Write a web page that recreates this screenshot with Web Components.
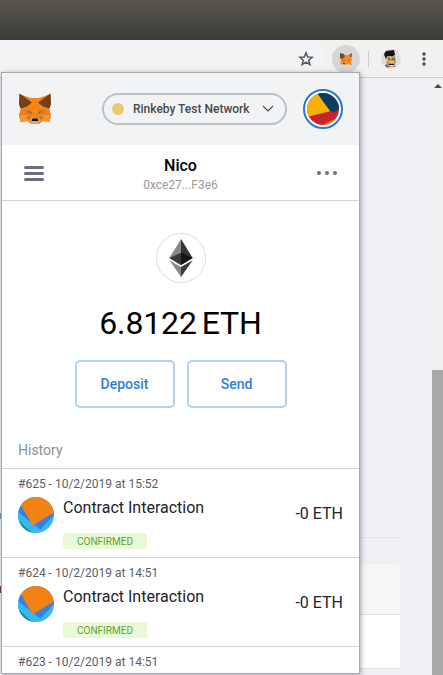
<!DOCTYPE html>
<html lang="en"><head><meta charset="utf-8"><title>MetaMask</title>
<style>html,body{margin:0;height:675px;overflow:hidden;background:#eff0f5;font-family:Roboto,"Liberation Sans",sans-serif}</style></head>
<body><wallet-desktop></wallet-desktop>
<script>
const define=(name,html)=>customElements.define(name,class extends HTMLElement{
  constructor(){super();const t=document.createElement('template');t.innerHTML=html;this.attachShadow({mode:'open'}).append(t.content.cloneNode(true));}
});
define('fox-logo',`<style>:host{display:block}svg{display:block;width:100%;height:100%}</style>
<svg viewBox="0 0 34 32"><path fill="#f6851b" d="M1.500 1 13 5H21L32.500 1 33 11 31 16 33 22 31.500 29 25 28 21 31H13L9 28 2.500 29 1 22 3 16 1 11Z"/>
<path fill="#763d16" d="M1.500 .5 14 9.500 9 13.500 2.500 15.500 1 11ZM32.500 .5 20 9.500 25 13.500 31.500 15.500 33 11Z"/>
<path fill="#e98124" d="M1 22 3 16 11 15 13 24 2 23ZM33 22 31 16 23 15 21 24 32 23Z"/>
<path fill="#f89232" d="M1 22H9L11 28 2.500 29ZM33 22H25L23 28 31.500 29Z"/>
<path fill="#d66f1b" d="M8 17 13 18 14 21 9 20ZM26 17 21 18 20 21 25 20ZM8 25 11 23 14 28ZM26 25 23 23 20 28Z"/>
<path fill="#6b5a55" d="M10.500 18.400 13.500 19 13 20.300ZM23.500 18.400 20.500 19 21 20.300Z"/>
<path fill="#c0ad9e" d="M11.500 27 14 25H20L22.500 27 21.500 29 19.500 31H14.500L12.500 29Z"/><path fill="#161616" d="M14.500 25.500H19.500L20.500 28H13.500Z"/></svg>`);
define('extension-icon',`<style>:host{display:block}svg{display:block}</style><svg width="14" height="14" viewBox="0 0 14 14"><path fill="#f08a2c" d="M1 1 5 3H9L13 1 12.500 5 13 8 12 10 13 13 9 12 6 13 1 12 2 9 1 6Z"/><path fill="#7c4a1d" d="M1 1 5 2 6 5 3 7 1 6Z"/><path fill="#b5651f" d="M13 1 10 3 11 5 13 5Z"/><path fill="#c9651c" d="M3 8 6 8 5 10ZM9 7 11 8 9 9Z"/><path fill="#5b463b" d="M4 11H6V12H4Z"/></svg>`);
define('browser-toolbar',`<style>:host{display:block}.title{height:40px;background:linear-gradient(#59574f,#3d3b37)}
.bar{height:37px;background:#f2f1ef;border-bottom:1px solid #cfcfcf;display:flex;align-items:center}
.address{width:326px;height:36px;box-sizing:border-box;background:#f1f3f4;border-radius:0 18px 18px 0;display:flex;align-items:center;justify-content:flex-end;padding-right:12px}
.ext{width:28px;height:28px;border-radius:50%;background:#d7d6d4;display:grid;place-items:center;margin-left:6px}
.sep{width:1px;height:16px;background:#cfcecd;margin:0 12px 0 8px}svg{display:block}.menu{margin-left:21px}</style>
<div class="title"></div><div class="bar"><div class="address"><svg width="16" height="16" viewBox="0 0 16 16" fill="none" stroke="#55585c" stroke-width="1.500"><path d="M8 1.800 9.700 6 14.200 6.300 10.700 9.200 11.900 13.700 8 11.200 4.100 13.700 5.300 9.200 1.800 6.300 6.300 6Z"/></svg></div>
<div class="ext"><extension-icon></extension-icon></div><div class="sep"></div>
<svg width="20" height="20" viewBox="0 0 20 20"><circle cx="10" cy="10" r="10" fill="#dedddc"/><path fill="#c19548" d="M5 7H14L15 13 13 18H7L5 13Z"/><path fill="#e0bc70" d="M5 9H7V13H5ZM8 12H13V14H8Z"/><path fill="#151515" d="M3 5 5 2 13 1 14 6 12 7 6 7 5 10 4 8ZM8 15H13V16H8Z"/><path fill="#3f70bb" d="M7 9H9V11H7ZM11 9H14V11H11ZM4 16 6 15 8 19 5 18ZM13 18 15 16 14 18Z"/><path fill="#fff" d="M9 16H12V17H9ZM9 8H10V9H9Z"/></svg>
<svg class="menu" width="4" height="16" viewBox="0 0 4 16" fill="#48494b"><circle cx="2" cy="3" r="1.700"/><circle cx="2" cy="8" r="1.700"/><circle cx="2" cy="13" r="1.700"/></svg></div>`);
define('page-backdrop',`<style>:host{display:flex;height:597px;background:#eff0f5;justify-content:space-between}
.edge{width:1px;padding-top:435px;box-sizing:border-box}.blue{height:6px;background:#6f9bd0}.red{height:7px;margin-top:67px;background:#75443b}
.content{width:399px;padding-top:459px;margin-right:auto}.rule{height:1px;background:#e3e4e7}.panel{margin-top:26px;height:50px;background:#f6f6f7;border-bottom:1px solid #e2e2e3;border-radius:0 4px 0 0}.body{height:53px;background:#fff;border-bottom:1px solid #e2e2e3}
.scroll{width:11px;background:#f1f1f0}.arrow{width:0;border:4px solid transparent;border-top:0;border-bottom-color:#4c4c4c;margin:6px 0 282px 2px}.thumb{height:305px;background:#a8a8a8}</style>
<div class="edge"><div class="blue"></div><div class="red"></div></div><div class="content"><div class="rule"></div><div class="panel"></div><div class="body"></div></div><div class="scroll"><div class="arrow"></div><div class="thumb"></div></div>`);
define('network-picker',`<style>:host{display:flex;box-sizing:border-box;width:185px;height:32px;border:2px solid #bbc0c5;border-radius:16px;align-items:center;padding-left:8px;font:500 12px/14px Roboto,sans-serif;color:#4a4a4a}
i{width:12px;height:12px;border-radius:50%;background:#ebc871;margin-right:9px}span{width:118px;white-space:nowrap}svg{margin-left:11px}</style>
<i></i><span><slot></slot></span><svg width="12" height="8" viewBox="0 0 12 8" fill="none" stroke="#4c4c4c" stroke-width="1.200"><path d="M1 1 6 6 11 1"/></svg>`);
define('account-avatar',`<style>:host{display:block;width:40px;height:40px}svg{display:block}</style><svg width="40" height="40" viewBox="0 0 40 40"><defs><clipPath id="a"><circle cx="20" cy="20" r="16"/></clipPath></defs><circle cx="20" cy="20" r="19" fill="#fff" stroke="#267ad7" stroke-width="2"/><g clip-path="url(#a)"><path fill="#c8242d" d="M0 0H40V40H0Z"/><path fill="#f9b10a" d="M0 0H12L28 22 0 29Z"/><path fill="#0d3d5c" d="M11 0H40V18L30.500 23.500 27 22Z"/><path fill="#f66b13" d="M18 36.500 38 27V40H18Z"/></g></svg>`);
define('account-bar',`<style>:host{display:flex;height:55px;border-bottom:1px solid #d1d3d5;align-items:center;justify-content:space-between;padding:0 22px}
.burger{width:20px;height:15px;display:flex;flex-direction:column;justify-content:space-between;margin-top:1px}.burger i{height:3px;border-radius:1.500px;background:#68707b}
.name{text-align:center;font:500 16px/18px Roboto,sans-serif;color:#000;margin-top:3px}.addr{font:400 12px/14px Roboto,sans-serif;color:#9b9b9b;margin-top:3px}.dots{display:flex;gap:4px}.dots i{width:4px;height:4px;border-radius:50%;background:#68707b}</style>
<div class="burger"><i></i><i></i><i></i></div><div class="name"><slot></slot><div class="addr"><slot name="address"></slot></div></div><div class="dots"><i></i><i></i><i></i></div>`);
define('action-button',`<style>:host{display:flex;box-sizing:border-box;width:100px;height:48px;border:2px solid #b0d2ee;border-radius:5px;align-items:center;justify-content:center;color:#2f7cdb;font:500 14px/20px Roboto,sans-serif}</style><span style="margin-right:1px"><slot></slot></span>`);
define('wallet-balance',`<style>:host{display:flex;height:235px;flex-direction:column;align-items:center;padding-top:32px;box-sizing:border-box}
.coin{width:50px;height:50px;box-sizing:border-box;border:1px solid #ddd;border-radius:50%;display:grid;place-items:center;margin-left:1px}.amount{display:flex;gap:5px;font:400 32px/38px Roboto,sans-serif;letter-spacing:-.15px;color:#000;margin-top:21px;height:38px}.actions{display:flex;gap:12px;margin-top:18px;margin-left:1px}</style>
<div class="coin"><svg width="24" height="38" viewBox="0 0 24 38"><path fill="#8a8a8a" d="M12 0V26L.3 19Z"/><path fill="#343434" d="M12 0V26L23.700 19Z"/><path fill="#383838" d="M.3 19 12 13.800V26Z"/><path fill="#151515" d="M23.700 19 12 13.800V26Z"/><path fill="#8a8a8a" d="M.3 21.300 12 28V38Z"/><path fill="#3a3a3a" d="M23.700 21.300 12 28V38Z"/></svg></div><div class="amount"><span>6.8122</span><span>ETH</span></div><div class="actions"><action-button>Deposit</action-button><action-button>Send</action-button></div>`);
define('transaction-row',`<style>:host{display:block;box-sizing:border-box;height:89px;border-bottom:1px solid #d1d3d5;padding:8px 16px 0}
:host([collapsed]){height:27px;border:0}:host([collapsed]) .main{display:none}
.date{font:400 12px/14px Roboto,sans-serif;color:#5b5d67}.main{display:flex;margin-top:5px}svg{display:block;margin-top:1px}.info{margin-left:9px;flex:1}.title,.value{font:400 16px/20px Roboto,sans-serif;color:#22232c;white-space:nowrap}.title{margin-top:2px}.value{margin-top:8px}.status{width:84px;height:16px;border-radius:3px;background:#eaf9d8;color:#5ba32b;font:400 10px/17px Roboto,sans-serif;text-align:center;margin-top:15px}</style>
<div class="date"><slot></slot></div><div class="main"><svg width="36" height="36" viewBox="0 0 36 36"><defs><clipPath id="a"><circle cx="18" cy="18" r="18"/></clipPath></defs><g clip-path="url(#a)"><path fill="#36b8f5" d="M0 0H36V36H0Z"/><path fill="#377fe0" d="M3 8 0 15 12.500 25 22.500 32.500 36 18V14Z"/><path fill="#36b8f5" d="M0 15.500 14.500 28 23 33 18 36H0Z"/><path fill="#f28213" d="M3 8 14.500 28.500 36 15.500V0H0Z"/><path fill="#198d83" d="M0 23 14 36H0Z"/></g></svg><div class="info"><div class="title">Contract Interaction</div><div class="status">CONFIRMED</div></div><div class="value">-0 ETH</div></div>`);
define('wallet-popup',`<style>:host{display:block;box-sizing:border-box;width:359px;height:602px;border:1px solid #a9aaac;background:#fff;box-shadow:1px 1px 5px #0005;overflow:hidden}
header{height:72px;background:#f2f3f5;display:flex;align-items:center;padding:0 16px}header fox-logo{width:34px;height:32px}network-picker{margin-left:50px}account-avatar{margin-left:16px}.history{height:32px;border-bottom:1px solid #d1d3d5;padding-left:16px;font:400 14px/28px Roboto,sans-serif;color:#8b8e98}</style>
<header><fox-logo></fox-logo><network-picker>Rinkeby Test Network</network-picker><account-avatar></account-avatar></header><account-bar>Nico<span slot="address">0xce27...F3e6</span></account-bar><wallet-balance></wallet-balance><div class="history">History</div>
<transaction-row>#625 - 10/2/2019 at 15:52</transaction-row><transaction-row>#624 - 10/2/2019 at 14:51</transaction-row><transaction-row collapsed>#623 - 10/2/2019 at 14:51</transaction-row>`);
define('wallet-desktop',`<style>:host{display:block;position:relative;width:443px;height:675px;overflow:hidden}wallet-popup{position:absolute;left:1px;top:72px}</style><browser-toolbar></browser-toolbar><page-backdrop></page-backdrop><wallet-popup></wallet-popup>`);
</script></body></html>
